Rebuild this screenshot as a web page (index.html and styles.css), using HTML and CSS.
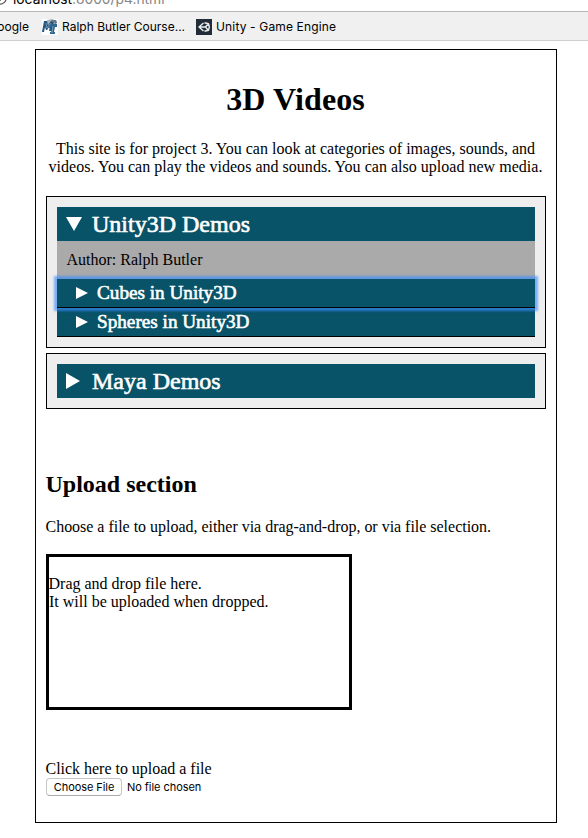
FILE: index.html
```html
<!DOCTYPE html>
<html lang="en">
<head>
<meta charset="utf-8">
<title>3D Videos</title>
<link rel="stylesheet" href="styles.css">
</head>
<body>
<header class="browser">
  <div class="address">
    <svg class="info" width="14" height="14" viewBox="0 0 14 14"><circle cx="7" cy="7" r="6.2" fill="none" stroke="#555" stroke-width="1.3"/><path d="M7 6v4" stroke="#555" stroke-width="1.5"/></svg>
    <span class="url">localhost<span class="path">:8000/p4.html</span></span>
  </div>
  <nav class="bookmarks">
    <span class="google">Google</span>
    <svg class="mt-icon" width="16" height="16" viewBox="0 0 16 16"><path fill="#fff" d="M0 0h16v16H0z"/><path fill="#a9b5bf" d="M5 1l5-1 5 2-1 4-4 1-5-2z"/><path fill="#24577f" d="M2 2h3l1 4 3-4h3l-2 10H7l1-5-3 4H4L3 8l-1 5H0z"/><path fill="#66798b" d="M9 1l5 0 1 3-2 1-1-2h-2z"/><path fill="#2f668f" d="M7 5h8v3h-2l-1 5h1v2H8v-2h1l1-5-3 1z"/><path fill="none" stroke="#bdccd8" stroke-width=".5" d="M4 4l1 5 4-5M11 7l-1 7"/></svg>
    <span class="course">Ralph Butler Course...</span>
    <svg class="unity-icon" width="16" height="16" viewBox="0 0 16 16"><path fill="#222c37" d="M0 0h16v16H0z"/><path fill="none" stroke="#e9edef" stroke-width="1.4" stroke-linejoin="round" d="M7.5 4L3 8l4.500 4M8.500 3.700l4 1 .8 3.300-.8 3.300-4 1M4 8h5.500M12 5L9.500 8l2.500 3"/></svg>
    <span class="engine">Unity - Game Engine</span>
  </nav>
</header>
<main class="page">
  <h1>3D Videos</h1>
  <p class="intro">This site is for project 3. You can look at categories of images, sounds, and<br><span class="intro-b">videos. You can play the videos and sounds. You can also upload new media.</span></p>
  <section class="category">
    <div class="summary"><svg class="marker" width="16" height="14" viewBox="0 0 16 14"><path fill="#fff" d="M0 0h16L8 14z"/></svg><span>Unity3D Demos</span></div>
    <div class="author">Author: Ralph Butler</div>
    <div class="item focused"><svg class="marker" width="12" height="12" viewBox="0 0 12 12"><path fill="#fff" d="M0 0l12 6-12 6z"/></svg><span>Cubes in Unity3D</span></div>
    <div class="item"><svg class="marker" width="12" height="12" viewBox="0 0 12 12"><path fill="#fff" d="M0 0l12 6-12 6z"/></svg><span>Spheres in Unity3D</span></div>
  </section>
  <section class="category">
    <div class="summary"><svg class="marker" width="16" height="16" viewBox="0 0 16 16"><path fill="#fff" d="M0 0l14 8-14 8z"/></svg><span>Maya Demos</span></div>
  </section>
  <h2>Upload section</h2>
  <p class="hint">Choose a file to upload, either via drag-and-drop, or via file selection.</p>
  <div class="drop">Drag and drop file here.<br>It will be uploaded when dropped.</div>
  <div class="click">Click here to upload a file</div>
  <div class="file"><button type="button">Choose File</button><span>No file chosen</span></div>
</main>
</body>
</html>
```

FILE: styles.css
```css
* { box-sizing: border-box; }
body {
  margin: 0;
  height: 838px;
  overflow: hidden;
  background: #fff;
  color: #000;
  font: 16px/18px "Liberation Serif", serif;
  white-space: nowrap;
}
svg { display: block; flex: none; }
.browser { font-family: Inter, "Liberation Sans", sans-serif; }
.address {
  height: 11px;
  display: flex;
  align-items: flex-end;
  overflow: hidden;
  font-size: 13.8px;
}
.info { margin: 0 6px 6px -7px; }
.url { line-height: 20px; margin-bottom: 2px; }
.path { color: #858585; }
.bookmarks {
  height: 30px;
  display: flex;
  align-items: center;
  background: #f0f0f0;
  border-top: 1px solid #b3b7b7;
  border-bottom: 1px solid #cfcfcf;
  font-size: 12px;
  padding-top: 1px;
}
.google { width: 42px; flex: none; display: flex; justify-content: flex-end; padding-right: 13px; }
.course { width: 134px; flex: none; margin-left: 4px; }
.engine { margin-left: 4px; letter-spacing: .15px; }
.page {
  width: 522px;
  height: 774px;
  margin: 8px 0 0 35px;
  padding: 0 10px;
  border: 1px solid #000;
}
h1 {
  margin: 31px 1px 0 0;
  font-size: 32px;
  line-height: 37px;
  text-align: center;
  letter-spacing: .1px;
}
.intro { margin: 22px -1px 20px -2px; text-align: center; }
.intro-b { letter-spacing: .02px; }
.category {
  margin-bottom: 5px;
  padding: 10px;
  border: 1px solid #000;
  background: #eee;
}
.summary {
  height: 34px;
  padding-left: 9px;
  display: flex;
  align-items: center;
  background: #085368;
  color: #fff;
  font-size: 24px;
  -webkit-text-stroke: .6px #fff;
}
.summary .marker { margin-right: 10px; }
.author { height: 38px; padding: 10px 9.5px; background: #aaa; }
.item {
  height: 29px;
  padding-left: 19px;
  display: flex;
  align-items: center;
  background: #085368;
  border-bottom: 1px solid #000;
  color: #fff;
  font-size: 19.2px;
  -webkit-text-stroke: .6px #fff;
}
.item .marker { margin-right: 9px; }
.focused {
  position: relative;
  box-shadow: 0 0 2px 3px rgba(59, 142, 250, .65);
}
h2 { margin: 61px 0 0 -.5px; font-size: 24px; line-height: 28px; }
.hint { margin: 20px 0 18px -.5px; letter-spacing: -.02px; }
.drop { width: 306px; height: 156px; border: 3px solid #000; padding-top: 18px; text-indent: -.5px; }
.click { margin: 50px 0 0 -.5px; letter-spacing: -.02px; }
.file {
  display: flex;
  align-items: center;
  height: 18px;
  font: 11px Inter, "Liberation Sans", sans-serif;
}
.file button {
  width: 76px;
  height: 18px;
  padding: 0;
  margin-right: 5px;
  border: 1px solid #c5c5c5;
  border-bottom-color: #aaa;
  border-radius: 4px;
  background: #fff;
  color: #000;
  font: inherit;
  letter-spacing: -.07px;
}
.file span { letter-spacing: -.05px; }
```
